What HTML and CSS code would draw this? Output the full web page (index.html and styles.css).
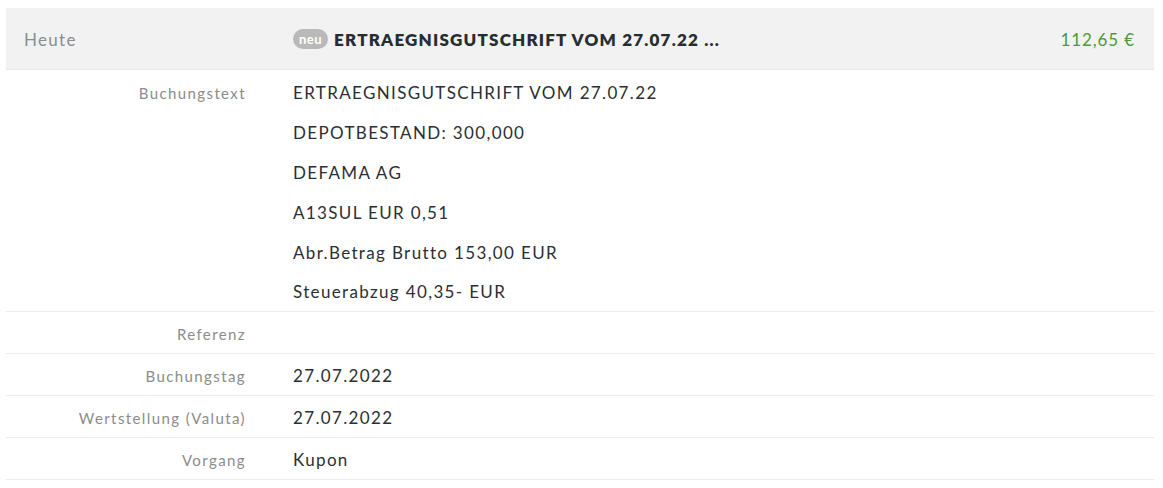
FILE: index.html
```html
<!DOCTYPE html>
<html lang="de">
<head>
<meta charset="utf-8">
<link rel="stylesheet" href="styles.css">
</head>
<body>
<div class="panel">
  <div class="head">
    <div class="head-date">Heute</div>
    <div class="head-title"><span class="badge">neu</span><span class="title">ERTRAEGNISGUTSCHRIFT VOM 27.07.22 ...</span></div>
    <div class="head-amount">112,65 €</div>
  </div>
  <div class="row multi">
    <div class="label">Buchungstext</div>
    <div class="value">
      <div class="line">ERTRAEGNISGUTSCHRIFT VOM 27.07.22</div>
      <div class="line">DEPOTBESTAND: 300,000</div>
      <div class="line">DEFAMA AG</div>
      <div class="line">A13SUL EUR 0,51</div>
      <div class="line">Abr.Betrag Brutto 153,00 EUR</div>
      <div class="line">Steuerabzug 40,35- EUR</div>
    </div>
  </div>
  <div class="row">
    <div class="label">Referenz</div>
    <div class="value"></div>
  </div>
  <div class="row">
    <div class="label">Buchungstag</div>
    <div class="value">27.07.2022</div>
  </div>
  <div class="row">
    <div class="label">Wertstellung (Valuta)</div>
    <div class="value">27.07.2022</div>
  </div>
  <div class="row">
    <div class="label">Vorgang</div>
    <div class="value">Kupon</div>
  </div>
</div>
</body>
</html>
```

FILE: styles.css
```css
html, body {
  margin: 0;
  padding: 0;
  background: #ffffff;
}
body {
  font-family: Lato, "Open Sans", sans-serif;
  color: #2b2f33;
}
.panel {
  margin: 8px 9px 0 6px;
}
.head {
  display: grid;
  grid-template-columns: 269px 1fr auto;
  align-items: center;
  height: 62px;
  background: #f2f2f2;
  border-bottom: 1px solid #e9e9e9;
  box-sizing: border-box;
  padding: 1px 19px 0 18px;
}
.head-date {
  font-size: 17px;
  letter-spacing: 1.3px;
  color: #8c8c8c;
}
.head-title {
  display: flex;
  align-items: center;
  gap: 6px;
}
.badge {
  display: inline-block;
  background: #b9b9b9;
  color: #ffffff;
  font-size: 13px;
  font-weight: 700;
  letter-spacing: 0.5px;
  line-height: 20px;
  height: 20px;
  padding: 0 6px;
  border-radius: 10px;
}
.title {
  font-size: 17px;
  font-weight: 800;
  letter-spacing: 1.2px;
  color: #262d33;
}
.head-amount {
  font-size: 17px;
  letter-spacing: 0.9px;
  color: #4c9a38;
}
.row {
  display: grid;
  grid-template-columns: 240px 1fr;
  column-gap: 47px;
  border-bottom: 1px solid #ececec;
  min-height: 41px;
  align-items: center;
}
.row.multi {
  align-items: start;
  padding-top: 3px;
}
.label {
  text-align: right;
  font-size: 15px;
  letter-spacing: 1.4px;
  color: #8c8c8c;
  line-height: 38px;
  padding-top: 3px;
}
.row.multi .label {
  line-height: 40px;
  padding-top: 0;
}
.value {
  font-size: 17px;
  letter-spacing: 1.35px;
  color: #2b2f33;
  line-height: 38px;
  padding-top: 3px;
}
.row.multi .value {
  padding-top: 0;
}
.line {
  line-height: 40px;
}
.line:last-child {
  line-height: 38px;
}
```
